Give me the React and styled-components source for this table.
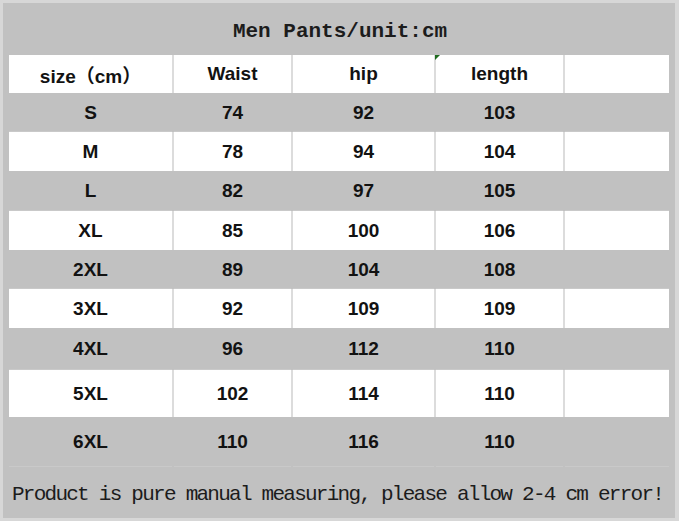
import React from "react";
import styled, { createGlobalStyle } from "styled-components";

const Global = createGlobalStyle`
  html, body { margin: 0; padding: 0; background: #d7d7d7; }
  #root { width: 679px; height: 521px; }
`;

const Frame = styled.div`
  box-sizing: border-box;
  margin: 3px 4px 3px 3px;
  width: 672px;
  height: 515px;
  background: #c1c1c1;
  padding: 0 6px;
  display: flex;
  flex-direction: column;
`;

const Title = styled.div`
  height: 52px;
  display: flex;
  align-items: center;
  justify-content: center;
  padding-left: 2px;
  font-family: "Liberation Mono", monospace;
  font-weight: bold;
  font-size: 21px;
  color: #1c1c1c;
  padding-top: 4px;
  box-sizing: border-box;
`;

const Row = styled.div`
  display: grid;
  grid-template-columns: 163px 119px 143px 129px 106px;
  height: ${(p) => p.$h}px;
  background: ${(p) => (p.$white ? "#ffffff" : "#c1c1c1")};
  ${(p) => (p.$white ? "" : "box-shadow: inset 0 -1px 0 #c9c9c9;")}
`;

const Cell = styled.div`
  position: relative;
  display: flex;
  align-items: center;
  justify-content: center;
  font-family: "Liberation Sans", "Noto Sans CJK SC", sans-serif;
  font-weight: bold;
  font-size: 19px;
  color: #121212;
  border-left: ${(p) => (p.$first ? "none" : `2px solid ${p.$white ? "#dcdcdc" : "#c1c1c1"}`)};
  box-sizing: border-box;
`;

const Marker = styled.span`
  position: absolute;
  left: -1px;
  top: 0;
  width: 0;
  height: 0;
  border-top: 5px solid #1f6b1f;
  border-right: 5px solid transparent;
`;

const Footer = styled.div`
  flex: 1;
  display: flex;
  align-items: center;
  padding-left: 3px;
  padding-top: 4px;
  font-family: "Liberation Mono", monospace;
  font-size: 21px;
  letter-spacing: -1.75px;
  color: #1c1c1c;
  white-space: nowrap;
`;

const header = ["size（cm）", "Waist", "hip", "length", ""];
const rows = [
  ["S", "74", "92", "103", 39],
  ["M", "78", "94", "104", 39],
  ["L", "82", "97", "105", 40],
  ["XL", "85", "100", "106", 39],
  ["2XL", "89", "104", "108", 39],
  ["3XL", "92", "109", "109", 39],
  ["4XL", "96", "112", "110", 42],
  ["5XL", "102", "114", "110", 47],
  ["6XL", "110", "116", "110", 50],
];

export default function App() {
  return (
    <>
      <Global />
      <Frame>
        <Title>Men Pants/unit:cm</Title>
        <Row $white $h={38}>
          {header.map((h, i) => (
            <Cell key={i} $first={i === 0} $white>
              {i === 3 && <Marker />}
              {h}
            </Cell>
          ))}
        </Row>
        {rows.map((r, ri) => {
          const white = ri % 2 === 1;
          return (
            <Row key={ri} $white={white} $h={r[4]}>
              {[r[0], r[1], r[2], r[3], ""].map((c, i) => (
                <Cell key={i} $first={i === 0} $white={white}>
                  {c}
                </Cell>
              ))}
            </Row>
          );
        })}
        <Footer>Product is pure manual measuring, please allow 2-4 cm error!</Footer>
      </Frame>
    </>
  );
}
